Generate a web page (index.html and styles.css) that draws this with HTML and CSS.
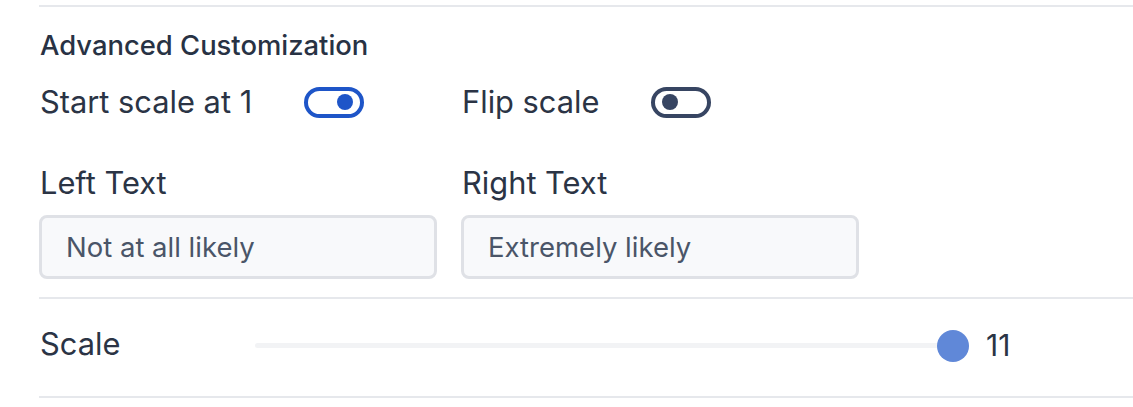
FILE: index.html
```html
<!DOCTYPE html>
<html>
<head>
<meta charset="utf-8">
<link rel="stylesheet" href="styles.css">
</head>
<body>
<div class="panel">
  <div class="block advanced">
    <h3 class="heading">Advanced Customization</h3>
    <div class="grid toggles">
      <div class="toggle-row">
        <span class="label">Start scale at 1</span>
        <span class="switch on"><span class="knob"></span></span>
      </div>
      <div class="toggle-row">
        <span class="label">Flip scale</span>
        <span class="switch off"><span class="knob"></span></span>
      </div>
    </div>
    <div class="grid fields">
      <div class="field">
        <span class="label">Left Text</span>
        <div class="input">Not at all likely</div>
      </div>
      <div class="field">
        <span class="label">Right Text</span>
        <div class="input">Extremely likely</div>
      </div>
    </div>
  </div>
  <div class="block scale-row">
    <span class="label scale-label">Scale</span>
    <div class="slider">
      <div class="track"></div>
      <div class="thumb"></div>
    </div>
    <span class="value">11</span>
  </div>
</div>
</body>
</html>
```
FILE: styles.css
```css
html, body {
  margin: 0;
  padding: 0;
  background: #ffffff;
}
body {
  font-family: Inter, "Noto Sans", sans-serif;
  color: #2b3445;
}
.panel {
  padding-top: 5px;
  padding-left: 39px;
}
.block {
  border-top: 2px solid #e6e8ec;
}
.advanced {
  padding-bottom: 18px;
}
.heading {
  margin: 0;
  padding-top: 22px;
  padding-left: 1px;
  font-size: 27.4px;
  font-weight: 500;
  line-height: 32px;
  color: #283244;
}
.label {
  font-size: 30.8px;
  line-height: 36px;
  color: #2b3445;
  padding-left: 1px;
}
.grid {
  display: grid;
  grid-template-columns: 398px 398px;
  column-gap: 24px;
}
.toggles {
  margin-top: 23px;
}
.toggle-row {
  display: flex;
  align-items: center;
  gap: 52px;
}
.switch {
  width: 60px;
  height: 31px;
  box-sizing: border-box;
  border-radius: 16px;
  border: 4px solid;
  display: flex;
  align-items: center;
  padding: 0 7px;
}
.switch .knob {
  width: 16px;
  height: 16px;
  border-radius: 50%;
}
.switch.on {
  border-color: #1e55c8;
  justify-content: flex-end;
}
.switch.on .knob {
  background: #1e55c8;
}
.switch.off {
  border-color: #374562;
  justify-content: flex-start;
}
.switch.off .knob {
  background: #374562;
}
.fields {
  margin-top: 45px;
}
.field {
  display: flex;
  flex-direction: column;
  align-items: stretch;
  gap: 14px;
}
.input {
  box-sizing: border-box;
  height: 64px;
  border: 3px solid #dfe1e6;
  border-radius: 8px;
  background: #f8f9fb;
  padding: 0 24px;
  display: flex;
  align-items: center;
  font-size: 27.5px;
  color: #4a5568;
}
.scale-row {
  display: flex;
  align-items: center;
  height: 93px;
  padding-bottom: 4px;
  border-bottom: 2px solid #e6e8ec;
}
.scale-label {
  width: 215px;
  margin-top: -4px;
}
.slider {
  position: relative;
  width: 714px;
  height: 32px;
  display: flex;
  align-items: center;
}
.track {
  width: 100%;
  height: 5px;
  border-radius: 3px;
  background: #f2f3f5;
}
.thumb {
  position: absolute;
  right: 0;
  top: 0;
  width: 32px;
  height: 32px;
  border-radius: 50%;
  background: #6088d8;
}
.value {
  margin-left: 17px;
  margin-top: -2px;
  font-size: 30px;
  color: #2b3445;
}
```
